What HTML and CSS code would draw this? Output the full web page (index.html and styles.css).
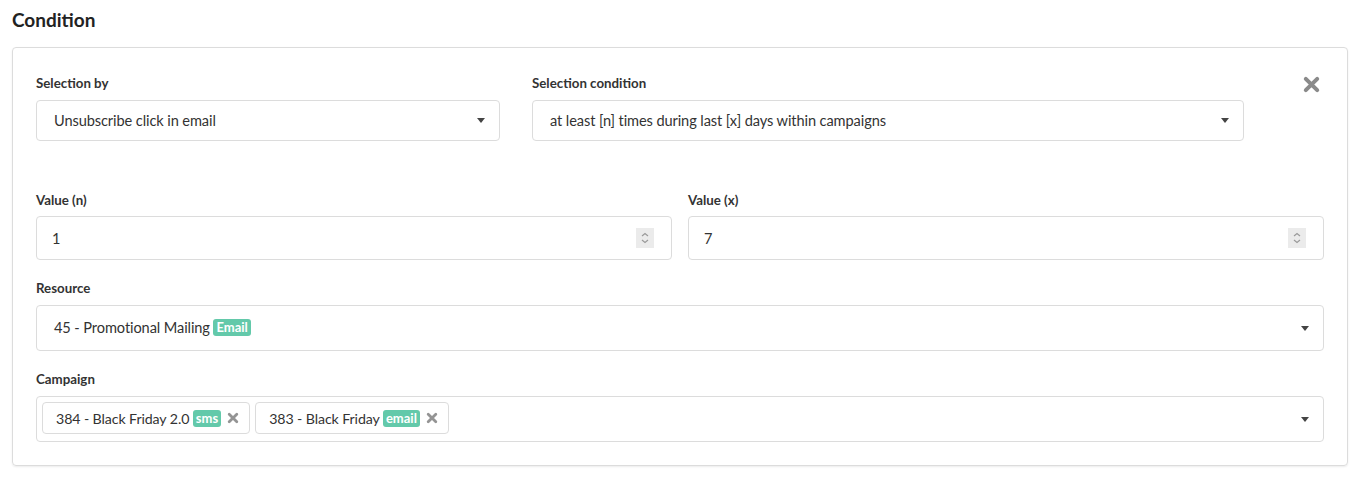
FILE: index.html
```html
<!DOCTYPE html>
<html>
<head>
<meta charset="utf-8">
<link rel="stylesheet" href="styles.css">
</head>
<body>
<div class="page">
  <h2 class="title">Condition</h2>
  <div class="card">
    <div class="row-top">
      <div class="field">
        <label class="lbl">Selection by</label>
        <div class="select h41"><span class="val">Unsubscribe click in email</span><span class="caret"></span></div>
      </div>
      <div class="field">
        <label class="lbl">Selection condition</label>
        <div class="select h41"><span class="val">at least [n] times during last [x] days within campaigns</span><span class="caret"></span></div>
      </div>
      <div class="close-wrap">
        <svg class="close" viewBox="0 0 20 20" width="19" height="19"><path d="M4 4 L16 16 M16 4 L4 16" stroke="#8a8a8a" stroke-width="4.2" stroke-linecap="round"/></svg>
      </div>
    </div>
    <div class="row-two">
      <div class="field">
        <label class="lbl">Value (n)</label>
        <div class="input h44"><span class="val">1</span><span class="spin"><svg viewBox="0 0 18 18" width="18" height="18"><path d="M6 7 L9 4.5 L12 7 M6 11 L9 13.5 L12 11" fill="none" stroke="#9a9a9a" stroke-width="1.2"/></svg></span></div>
      </div>
      <div class="field">
        <label class="lbl">Value (x)</label>
        <div class="input h44"><span class="val">7</span><span class="spin"><svg viewBox="0 0 18 18" width="18" height="18"><path d="M6 7 L9 4.5 L12 7 M6 11 L9 13.5 L12 11" fill="none" stroke="#9a9a9a" stroke-width="1.2"/></svg></span></div>
      </div>
    </div>
    <div class="field mt">
      <label class="lbl">Resource</label>
      <div class="select h46"><span class="val">45 - Promotional Mailing <span class="badge">Email</span></span><span class="caret"></span></div>
    </div>
    <div class="field mt2">
      <label class="lbl">Campaign</label>
      <div class="select h46 multi">
        <div class="tags">
          <span class="tag">384 - Black Friday 2.0 <span class="badge">sms</span><svg class="tx" viewBox="0 0 12 12" width="12" height="12"><path d="M2.2 2.2 L9.8 9.8 M9.8 2.2 L2.2 9.8" stroke="#949494" stroke-width="2.8" stroke-linecap="round"/></svg></span>
          <span class="tag">383 - Black Friday <span class="badge">email</span><svg class="tx" viewBox="0 0 12 12" width="12" height="12"><path d="M2.2 2.2 L9.8 9.8 M9.8 2.2 L2.2 9.8" stroke="#949494" stroke-width="2.8" stroke-linecap="round"/></svg></span>
        </div>
        <span class="caret"></span>
      </div>
    </div>
  </div>
</div>
</body>
</html>
```
FILE: styles.css
```css
* { box-sizing: border-box; }
body {
  margin: 0;
  background: #fff;
  font-family: "Source Sans Pro", Lato, "Noto Sans", sans-serif;
  color: #333;
}
.page { padding: 8px 17px 8px 12px; }
.title {
  margin: 0 0 15px 0;
  font-size: 19px;
  font-weight: 700;
  line-height: 24px;
  color: #222;
}
.card {
  border: 1px solid #dcdcdc;
  border-radius: 4px;
  box-shadow: 0 1px 2px rgba(0,0,0,0.08);
  padding: 27px 23px 23px 23px;
}
.row-top {
  display: grid;
  grid-template-columns: 464fr 712fr 48fr;
  column-gap: 32px;
}
.close-wrap { display: flex; justify-content: flex-end; }
.close { display: block; margin-right: 3px; margin-top: 0; }
.row-two {
  display: grid;
  grid-template-columns: 1fr 1fr;
  column-gap: 16px;
  margin-top: 51px;
}
.mt { margin-top: 20px; }
.mt2 { margin-top: 20px; }
.field { display: flex; flex-direction: column; }
.lbl {
  font-size: 13.3px;
  font-weight: 700;
  line-height: 17px;
  margin-bottom: 8px;
  color: #333;
}
.row-two .lbl { margin-bottom: 7px; }
.select, .input {
  display: flex;
  align-items: center;
  justify-content: space-between;
  border: 1px solid #dcdcdc;
  border-radius: 4px;
  background: #fff;
  padding: 0 13px 0 17px;
  font-size: 14.6px;
  letter-spacing: -0.1px;
}
.h41 { height: 41px; }
.h44 { height: 44px; }
.h46 { height: 46px; padding-bottom: 2px; }
.val { white-space: nowrap; color: #333; }
.caret {
  width: 0; height: 0;
  border-left: 4.5px solid transparent;
  border-right: 4.5px solid transparent;
  border-top: 5px solid #444;
  margin-right: 1px;
}
.h46 .caret { margin-top: 2px; }
.input { padding-right: 17px; padding-left: 15px; }
.spin {
  width: 18px; height: 20px;
  background: #ebebeb;
  display: flex; align-items: center; justify-content: center;
}
.badge {
  display: inline-block;
  background: #63c9aa;
  color: #fff;
  font-weight: 700;
  font-size: 13px;
  line-height: 17px;
  padding: 0 3px;
  border-radius: 3px;
  vertical-align: 1px;
  letter-spacing: 0;
}
.multi { padding-left: 5px; }
.tags { display: flex; gap: 5px; }
.tag {
  display: inline-flex;
  align-items: center;
  height: 32px;
  border: 1px solid #dcdcdc;
  border-radius: 4px;
  padding: 0 10px 0 13px;
  font-size: 14.2px;
  white-space: pre;
}
.tx { display: block; margin-left: 6px; }
```
